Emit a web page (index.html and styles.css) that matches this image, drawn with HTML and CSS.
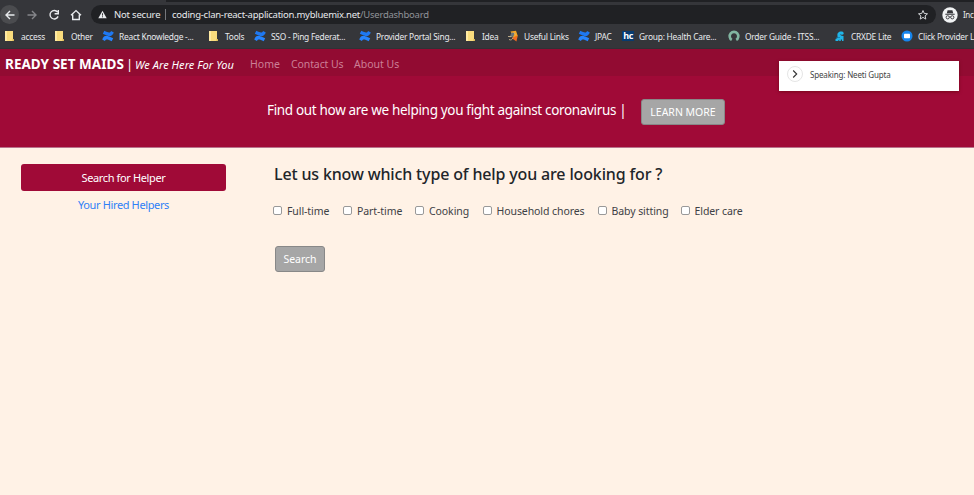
FILE: index.html
```html
<!DOCTYPE html>
<html lang="en">
<head>
<meta charset="utf-8">
<title>Ready Set Maids</title>
<link rel="stylesheet" href="styles.css">
</head>
<body>
<svg class="defs" aria-hidden="true">
  <symbol id="folder" viewBox="0 0 12 12"><path fill="#f9dc7d" d="M1 1h8v8h1v2H1z"/><path fill="#ffeaa3" d="M1 1h2v10H1z"/><path fill="#d9b957" d="M8.500 9H10v2H8.500z"/></symbol>
  <symbol id="confluence" viewBox="0 0 12 12"><path fill="#2684ff" d="M.8 8.200C3 4.800 5 5.300 11.200 8.300L9.700 11.300C5.500 9.300 4.200 8.900 2.900 11.100L.2 9.500z"/><path fill="#1e78f2" d="M11.200 3.800C9 7.200 7 6.700.8 3.700L2.300.7C6.500 2.700 7.800 3.100 9.100.9l2.700 1.600z"/></symbol>
</svg>
<div class="toolbar">
  <div class="tabs"></div>
  <div class="address-row">
    <span class="nav-btn back"><svg viewBox="0 0 12 12"><path d="M10.500 6H2M6 2L2 6l4 4"/></svg></span>
    <span class="nav-btn dim"><svg viewBox="0 0 12 12"><path d="M1.500 6H10M6 2l4 4-4 4"/></svg></span>
    <span class="nav-btn"><svg viewBox="0 0 12 12"><path d="M9.600 3.200A4.200 4.200 0 1 0 10.100 7.400M10.300 1v3.700H6.600"/></svg></span>
    <span class="nav-btn home-btn"><svg viewBox="0 0 12 12"><path d="M1 6.300L6 1.600l5 4.700M2.700 5.500v5h6.600v-5"/></svg></span>
    <div class="omnibox">
      <svg class="warn" viewBox="0 0 10 10"><path fill="#e8eaed" d="M5 .7L9.700 9.200H.3z"/><path stroke="#202124" d="M5 3.600v2.600M5 7v1.100"/></svg>
      <span class="secure">Not secure</span><span class="sep"></span>
      <span class="url"><span class="host">coding-clan-react-application.mybluemix.net</span><span class="path">/Userdashboard</span></span>
      <svg class="star" viewBox="0 0 12 12"><path d="M6 1.500l1.300 3 3.200.3-2.400 2.100.7 3.200L6 8.400l-2.800 1.700.7-3.200-2.400-2.100 3.200-.3z"/></svg>
    </div>
    <svg class="incog" viewBox="0 0 16 16"><circle cx="8" cy="8" r="7.700" fill="#f1f3f4"/><path fill="#35363a" d="M5.600 3.300h4.800l.8 3h-6.400zM3.300 6.700h9.400v1H3.300z"/><g fill="none" stroke="#35363a" stroke-width=".9"><circle cx="5.700" cy="10.300" r="1.600"/><circle cx="10.300" cy="10.300" r="1.600"/><path d="M7.300 10h1.400"/></g></svg>
    <span class="inc-text">Inc</span>
  </div>
  <div class="bookmarks">
    <span class="bm"><svg><use href="#folder"/></svg><b>access</b></span>
    <span class="bm"><svg><use href="#folder"/></svg><b>Other</b></span>
    <span class="bm"><svg><use href="#confluence"/></svg><b>React Knowledge -...</b></span>
    <span class="bm"><svg><use href="#folder"/></svg><b>Tools</b></span>
    <span class="bm"><svg><use href="#confluence"/></svg><b>SSO - Ping Federat...</b></span>
    <span class="bm"><svg><use href="#confluence"/></svg><b>Provider Portal Sing...</b></span>
    <span class="bm"><svg><use href="#folder"/></svg><b>Idea</b></span>
    <span class="bm"><svg viewBox="0 0 12 12"><path fill="#f6a623" d="M3.500 1.500L9 .8l1.500 4.400L10 9 6 7z"/><path fill="#f26b21" d="M4.500 8L10.500 5.500 9.500 11.500z"/><path fill="#69757c" d="M4.500 2.500l3 .5-1 3.500-4 1z"/><path fill="none" stroke="#c9b58f" stroke-width=".9" d="M1 6.500h3.500M2 9.500c2 1 3.500 0 4-2M7 2.500l1.500 2"/></svg><b>Useful Links</b></span>
    <span class="bm"><svg><use href="#confluence"/></svg><b>JPAC</b></span>
    <span class="bm"><i class="hc">hc</i><b>Group: Health Care...</b></span>
    <span class="bm"><svg viewBox="0 0 12 12"><path fill="none" stroke="#81b5a1" stroke-width="2.600" d="M3.800 9.900a4.300 4.300 0 1 1 4.400 0"/></svg><b>Order Guide - ITSS...</b></span>
    <span class="bm"><svg viewBox="0 0 12 12"><path fill="#20b5e8" d="M3.500 6C2.800 2.600 5.300 1 8 1.500c2.200.4 2.300 3 .3 3.200-1.200.1-1.600-.5-1.400-1C5.800 4.500 6.800 6 9.500 6v5H8V9.500H6.800V11H5.200V9.500L4 11H1.500V9l2-1z"/><path stroke="#126b9a" stroke-width=".6" d="M2 7.500h4"/></svg><b>CRXDE Lite</b></span>
    <span class="bm"><svg viewBox="0 0 12 12"><circle cx="6" cy="6" r="5.500" fill="#1685ed"/><rect x="3" y="3.700" width="6" height="4.500" rx=".7" fill="#fff"/></svg><b>Click Provider L</b></span>
  </div>
</div>
<header>
  <nav>
    <span class="brand">READY SET MAIDS</span><span class="bar">|</span><em>We Are Here For You</em>
    <a class="home">Home</a><a class="contact">Contact Us</a><a class="about">About Us</a>
  </nav>
  <div class="banner"><span class="find">Find out how are we helping you fight against coronavirus |</span><button class="learn">LEARN MORE</button></div>
</header>
<aside class="speaking"><span class="chev"><svg viewBox="0 0 10 10"><path d="M3.200 1.500L6.700 5 3.200 8.500"/></svg></span><span class="speaker">Speaking: Neeti Gupta</span></aside>
<main>
  <div class="side"><button class="helper">Search for Helper</button><a>Your Hired Helpers</a></div>
  <section>
    <h1>Let us know which type of help you are looking for ?</h1>
    <div class="options">
      <label><input type="checkbox"><span>Full-time</span></label>
      <label><input type="checkbox"><span>Part-time</span></label>
      <label><input type="checkbox"><span>Cooking</span></label>
      <label><input type="checkbox"><span>Household chores</span></label>
      <label><input type="checkbox"><span>Baby sitting</span></label>
      <label><input type="checkbox"><span>Elder care</span></label>
    </div>
    <button class="search">Search</button>
  </section>
</main>
</body>
</html>
```
FILE: styles.css
```css
* { box-sizing: border-box; }
body { margin: 0; height: 495px; overflow: hidden; background: #fff2e6; font-family: "Noto Sans", "Open Sans", sans-serif; color: #212529; position: relative; }
button { font-family: inherit; padding: 0; white-space: nowrap; }
.defs { display: none; }
.toolbar { height: 49px; background: #35363a; color: #e8eaed; overflow: hidden; border-bottom: 1px solid #303236; }
.tabs { height: 2px; margin-left: 166px; background: #202124; }
.address-row { height: 24px; display: flex; align-items: center; padding-top: 1px; white-space: nowrap; }
.nav-btn { width: 22px; height: 19px; display: flex; align-items: center; justify-content: center; flex: none; }
.nav-btn svg { width: 12px; height: 12px; fill: none; stroke: #e8eaed; stroke-width: 1.4; }
.nav-btn.dim svg { stroke: #85868a; }
.home-btn { width: 21px; }
.nav-btn.back { background: #4b4c4f; border-radius: 50%; width: 19px; margin-right: 2px; }
.omnibox { width: 845px; height: 19px; margin-left: 5px; padding: 0 8px 0 7px; background: #202124; border-radius: 10px; display: flex; align-items: center; font-size: 9.5px; flex: none; }
.warn { width: 9px; height: 9px; margin-right: 7px; }
.secure { width: 46px; letter-spacing: -.2px; }
.sep { width: 1px; height: 11px; background: #75777b; margin: 0 6px 0 5px; }
.url { flex: 1; letter-spacing: -.25px; }
.path { color: #909398; }
.star { width: 12px; height: 12px; fill: none; stroke: #d5d7da; stroke-width: 1; margin-right: -1px; }
.incog { width: 16px; height: 16px; margin-left: 6px; flex: none; }
.inc-text { font-size: 8px; margin-left: 5px; letter-spacing: -.35px; }
.bookmarks { height: 20px; display: grid; grid-template-columns: 50px 48px 106px 46px 105px 106px 42px 71px 44px 106px 106px 67px 110px; padding-left: 4px; white-space: nowrap; }
.bm { display: flex; align-items: center; gap: 5px; font-size: 8.4px; }
.bm b { font-weight: 400; letter-spacing: -.23px; }
.bm svg { width: 12px; height: 12px; flex: none; }
.hc { width: 12px; height: 10px; background: #073b70; color: #fff; font: 700 9px/9px "Open Sans", sans-serif; text-align: center; letter-spacing: -.5px; }
header { height: 98.500px; background: #a00a37; border-bottom: 1px solid #b9738c; color: #fff; }
nav { height: 27px; background: #920b32; display: flex; align-items: center; padding: 3px 0 0 5px; white-space: nowrap; line-height: 20px; }
.brand { width: 121px; font-size: 13.500px; font-weight: 700; letter-spacing: .03px; }
.bar { font-size: 13px; width: 9px; }
nav em { font-size: 11px; width: 115px; padding-top: 2px; letter-spacing: .05px; }
nav a { font-size: 10.500px; color: #cc7f96; }
.home { width: 41px; } .contact { width: 63px; letter-spacing: -.1px; }
.banner { height: 70px; display: flex; align-items: center; padding: 1px 0 0 267px; }
.find { width: 374px; font-size: 13.500px; letter-spacing: -.33px; white-space: nowrap; padding-bottom: 3px; }
.learn { width: 84px; height: 26px; padding-top: 1px; color: #fff; background: #a6a6a6; border: 1px solid #888; border-radius: 3px; font-size: 10.500px; }
.speaking { position: absolute; left: 779px; top: 61px; width: 180px; height: 30px; background: #fff; display: flex; align-items: center; padding-left: 8px; font-size: 8px; color: #444; box-shadow: 0 1px 3px #5008; white-space: nowrap; }
.speaker { letter-spacing: -.16px; padding-bottom: 3px; }
.chev { width: 16px; height: 16px; border: 1px solid #e5e5e5; border-radius: 50%; margin: -4px 7px 0 0; display: flex; align-items: center; justify-content: center; }
.chev svg { width: 10px; height: 10px; fill: none; stroke: #333; stroke-width: 1.1; }
main { display: flex; padding: 16px 0 0 21px; }
.side { width: 205px; font-size: 11px; letter-spacing: -.37px; text-align: center; }
.helper { display: block; width: 205px; height: 27.500px; background: #a00a37; color: #fff; border: 0; border-radius: 3px; font-size: 11px; letter-spacing: -.37px; }
.side a { display: block; line-height: 28px; color: #2f80f7; }
section { margin-left: 48px; }
h1 { font-size: 16px; font-weight: 500; line-height: 21px; margin: 0; letter-spacing: -.15px; white-space: nowrap; }
.options { display: grid; grid-template-columns: 70px 72px 67.500px 115px 83px 80px; margin-top: 17px; height: 18px; margin-left: -1px; }
label { display: flex; align-items: center; font-size: 10.500px; letter-spacing: -.08px; color: #3d4145; white-space: nowrap; }
input { appearance: none; width: 9px; height: 9px; margin: 0 5px 1px 0; background: #fff; border: 1px solid #999; border-radius: 2px; flex: none; }
.search { display: block; margin: 26px 0 0 1px; width: 50px; height: 26px; padding-top: 1px; border: 1px solid #888; border-radius: 3px; background: #a6a6a6; color: #fff; font-size: 10.500px; }
```
